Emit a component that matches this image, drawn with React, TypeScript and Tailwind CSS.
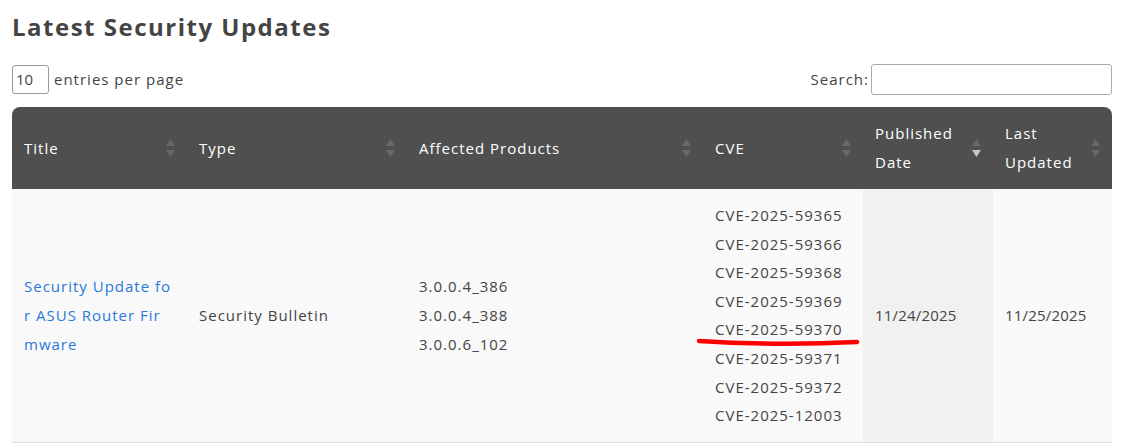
import React from "react";

const cves = [
  "CVE-2025-59365",
  "CVE-2025-59366",
  "CVE-2025-59368",
  "CVE-2025-59369",
  "CVE-2025-59370",
  "CVE-2025-59371",
  "CVE-2025-59372",
  "CVE-2025-12003",
];

const products = ["3.0.0.4_386", "3.0.0.4_388", "3.0.0.6_102"];

function SortIcon({ active }: { active?: "asc" | "desc" }) {
  return (
    <span className="absolute right-[12px] top-1/2 -translate-y-1/2 flex flex-col gap-[4px]">
      <svg width="9" height="7" viewBox="0 0 9 7">
        <path d="M4.5 0 L9 7 L0 7 Z" fill={active === "asc" ? "#c9c2d6" : "#686868"} />
      </svg>
      <svg width="9" height="7" viewBox="0 0 9 7">
        <path d="M0 0 L9 0 L4.5 7 Z" fill={active === "desc" ? "#c9c2d6" : "#686868"} />
      </svg>
    </span>
  );
}

const cols = [
  { label: ["Title"], w: "w-[175px]" },
  { label: ["Type"], w: "w-[220px]" },
  { label: ["Affected Products"], w: "w-[296px]" },
  { label: ["CVE"], w: "w-[160px]" },
  { label: ["Published", "Date"], w: "w-[130px]", sort: "desc" as const },
  { label: ["Last", "Updated"], w: "w-[119px]" },
];

export default function App() {
  return (
    <div className="min-h-[447px] bg-white px-[12px] pt-[10px] text-[#444] font-['Open_Sans',sans-serif] tracking-[1px]">
      <div className="w-[1100px]">
        <h1 className="text-[24px] font-bold leading-[34px] text-[#444] tracking-[1.5px]">
          Latest Security Updates
        </h1>

        <div className="mt-[20px] flex items-center justify-between">
          <div className="flex items-center gap-[5px] text-[15px]">
            <div className="h-[29px] w-[37px] rounded-[3px] border border-[#999] px-[3px] leading-[27px] tracking-normal">
              10
            </div>
            <span>entries per page</span>
          </div>
          <div className="flex items-center gap-[2px] text-[15px]">
            <span>Search:</span>
            <input className="h-[31px] w-[241px] rounded-[3px] border border-[#aaa] bg-white outline-none" />
          </div>
        </div>

        <div className="relative mt-[12px]">
          <table className="w-full table-fixed border-collapse text-[15px]">
            <thead>
              <tr className="bg-[#4f4f4f] text-white">
                {cols.map((c, i) => (
                  <th
                    key={i}
                    className={`relative ${c.w} h-[82px] px-[12px] text-left align-middle font-normal leading-[29px] ${
                      i === 0 ? "rounded-tl-[8px]" : ""
                    } ${i === cols.length - 1 ? "rounded-tr-[8px]" : ""}`}
                  >
                    {c.label.map((l) => (
                      <div key={l}>{l}</div>
                    ))}
                    <SortIcon active={c.sort} />
                  </th>
                ))}
              </tr>
            </thead>
            <tbody>
              <tr className="border-b border-[#ddd] bg-[#f9f9f9] leading-[28.6px]">
                <td className="px-[12px] py-[12px] align-middle text-[#2a78dc]">
                  <a href="#">
                    Security Update fo
                    <br />r ASUS Router Fir
                    <br />
                    mware
                  </a>
                </td>
                <td className="px-[12px] align-middle">Security Bulletin</td>
                <td className="px-[12px] align-middle">
                  {products.map((p) => (
                    <div key={p}>{p}</div>
                  ))}
                </td>
                <td className="px-[12px] py-[12px] align-middle">
                  {cves.map((c) => (
                    <div key={c}>{c}</div>
                  ))}
                </td>
                <td className="bg-[#f1f1f1] px-[12px] align-middle tracking-[0.2px]">11/24/2025</td>
                <td className="px-[12px] align-middle tracking-[0.2px]">11/25/2025</td>
              </tr>
            </tbody>
          </table>
          {/* hand-drawn annotation under the highlighted CVE */}
          <svg
            className="pointer-events-none absolute left-[684px] top-[225px]"
            width="166"
            height="18"
            viewBox="0 0 166 18"
          >
            <path d="M3 9 Q80 14 161 10" stroke="#f00" strokeWidth="4.5" strokeLinecap="round" fill="none" />
          </svg>
        </div>
      </div>
    </div>
  );
}
